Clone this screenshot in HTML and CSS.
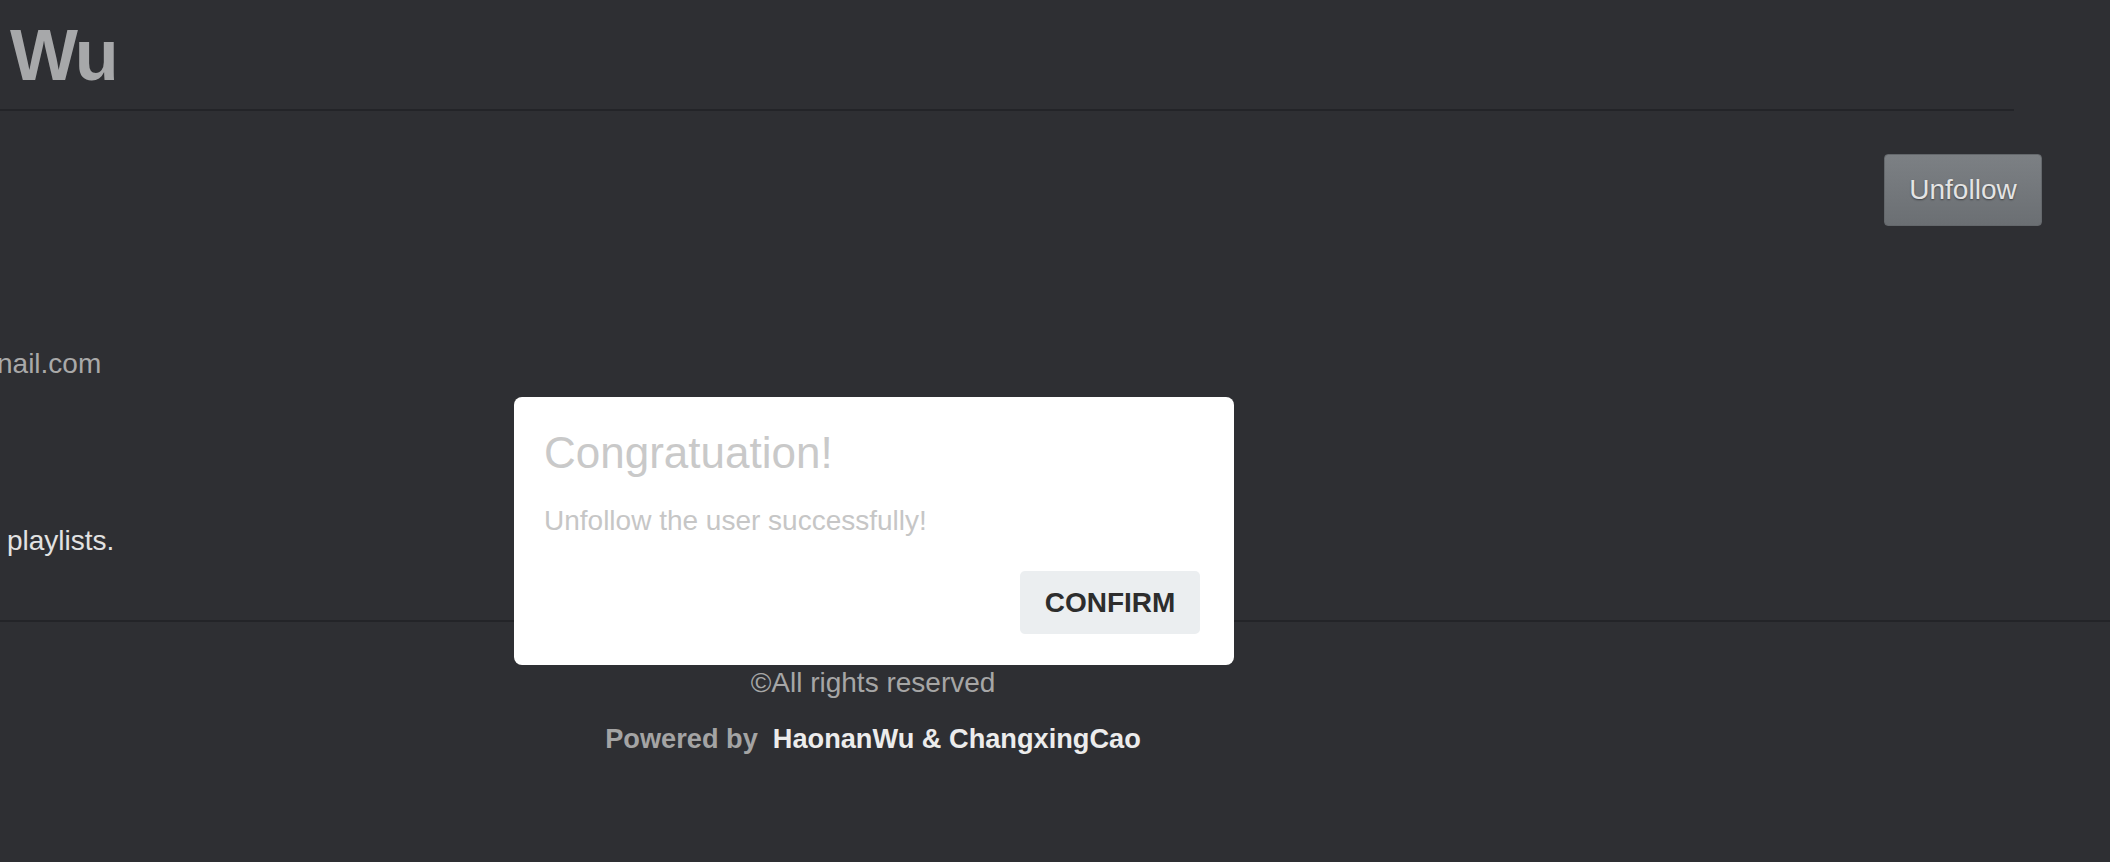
FILE: index.html
```html
<!DOCTYPE html>
<html lang="en">
<head>
<meta charset="utf-8">
<title>Profile</title>
<link rel="stylesheet" href="styles.css">
</head>
<body>
<div class="page">
  <header class="page-header">
    <h1 class="user-name">Wu</h1>
  </header>
  <main class="profile">
    <div class="action-row">
      <button class="btn-unfollow" type="button">Unfollow</button>
    </div>
    <p class="email">nail.com</p>
    <p class="playlists">playlists.</p>
  </main>
  <footer class="site-footer">
    <div class="footer-inner">
      <p class="copyright">©All rights reserved</p>
      <p class="powered"><span class="powered-label">Powered by</span><span class="authors">HaonanWu &amp; ChangxingCao</span></p>
    </div>
  </footer>
</div>
<div class="modal" role="dialog">
  <h2 class="modal-title">Congratuation!</h2>
  <p class="modal-text">Unfollow the user successfully!</p>
  <div class="modal-actions">
    <button class="btn-confirm" type="button">CONFIRM</button>
  </div>
</div>
</body>
</html>
```
FILE: styles.css
```css
html, body {
  margin: 0;
  padding: 0;
  height: 100%;
  overflow: hidden;
}
body {
  background: #2e2f33;
  font-family: "Liberation Sans", Arial, Helvetica, sans-serif;
  color: #a8a8a8;
}
.page {
  display: flex;
  flex-direction: column;
}
.page-header {
  margin-right: 96px;
  padding: 19px 0 18px 10px;
  border-bottom: 2px solid #232428;
}
.user-name {
  margin: 0;
  font-size: 72px;
  line-height: 72px;
  font-weight: bold;
  letter-spacing: -2px;
  color: #a7a8aa;
}
.profile {
  display: flex;
  flex-direction: column;
}
.action-row {
  display: flex;
  justify-content: flex-end;
  margin-top: 43px;
  padding-right: 68px;
}
.btn-unfollow {
  width: 158px;
  height: 72px;
  box-sizing: border-box;
  border: 1px solid #64686c;
  border-radius: 4px;
  background: linear-gradient(#7c8084, #6b6f73);
  color: #e4e4e4;
  font-family: inherit;
  font-size: 28px;
  line-height: 32px;
  padding: 0;
  text-shadow: 0 1px 2px rgba(0, 0, 0, 0.45);
}
.email {
  margin: 122px 0 0 0;
  text-indent: -3px;
  font-size: 28px;
  line-height: 32px;
  color: #a9a9a9;
}
.playlists {
  margin: 145px 0 0 0;
  padding-left: 7px;
  font-size: 28px;
  line-height: 32px;
  color: #e2e2e2;
}
.site-footer {
  margin-top: 63px;
  border-top: 2px solid #232428;
}
.footer-inner {
  width: 1746px;
  padding-top: 45px;
  text-align: center;
}
.copyright {
  margin: 0;
  font-size: 28px;
  line-height: 32px;
  color: #a6a6a6;
}
.powered {
  margin: 24px 0 0 0;
  font-size: 27.2px;
  line-height: 32px;
  font-weight: bold;
}
.powered-label {
  color: #a4a4a4;
}
.authors {
  margin-left: 15px;
  color: #ececec;
}
.modal {
  position: fixed;
  left: 514px;
  top: 397px;
  width: 720px;
  height: 268px;
  box-sizing: border-box;
  padding: 30px 34px 31px 30px;
  background: #ffffff;
  border-radius: 8px;
  display: flex;
  flex-direction: column;
}
.modal-title {
  margin: 0;
  font-size: 44px;
  line-height: 52px;
  font-weight: normal;
  color: #c9c9c9;
}
.modal-text {
  margin: 26px 0 0 0;
  font-size: 28px;
  line-height: 32px;
  color: #c6c6c6;
}
.modal-actions {
  margin-top: auto;
  display: flex;
  justify-content: flex-end;
}
.btn-confirm {
  width: 180px;
  height: 63px;
  box-sizing: border-box;
  border: 0;
  border-radius: 5px;
  background: #ebeef0;
  color: #2d2d2d;
  font-family: inherit;
  font-size: 28px;
  line-height: 31px;
  font-weight: bold;
  padding: 16px 0;
}
```
